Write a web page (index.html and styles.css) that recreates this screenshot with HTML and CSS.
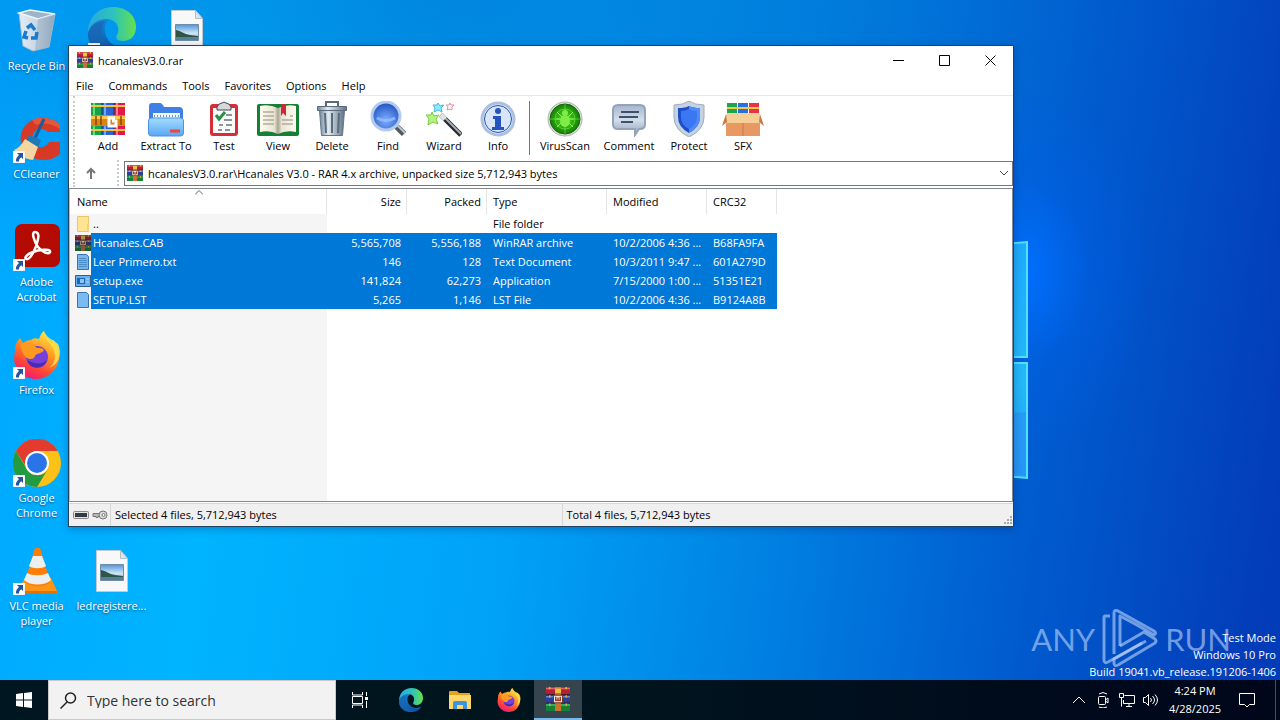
FILE: index.html
```html
<!DOCTYPE html>
<html lang="en">
<head>
<meta charset="utf-8">
<meta name="viewport" content="width=device-width, initial-scale=1">
<title>hcanalesV3.0.rar</title>
<link rel="stylesheet" href="styles.css">
</head>
<body>
<svg class="defs" aria-hidden="true">
  <defs>
    <linearGradient id="gEdgeA" x1="0" y1="0" x2="1" y2="0"><stop offset="0" stop-color="#2aa8e0"/><stop offset=".55" stop-color="#2fc4b8"/><stop offset="1" stop-color="#67e04a"/></linearGradient>
    <linearGradient id="gEdgeB" x1="0" y1="0" x2="0" y2="1"><stop offset="0" stop-color="#1789d8"/><stop offset="1" stop-color="#0c4fa0"/></linearGradient>
    <linearGradient id="gFox" x1=".8" y1="0" x2=".3" y2="1"><stop offset="0" stop-color="#fff04a"/><stop offset=".4" stop-color="#ff9a22"/><stop offset=".75" stop-color="#ff4438"/><stop offset="1" stop-color="#f0187c"/></linearGradient>
    <linearGradient id="gFold" x1="0" y1="0" x2="0" y2="1"><stop offset="0" stop-color="#a5dcff"/><stop offset="1" stop-color="#5aa7f4"/></linearGradient>
    <linearGradient id="gMetal" x1="0" y1="0" x2="1" y2="0"><stop offset="0" stop-color="#73879b"/><stop offset=".35" stop-color="#e3ebf2"/><stop offset="1" stop-color="#5e7287"/></linearGradient>
    <linearGradient id="gSilver" x1="0" y1="0" x2="0" y2="1"><stop offset="0" stop-color="#a5b5cc"/><stop offset=".5" stop-color="#d4deeb"/><stop offset="1" stop-color="#8fa1bb"/></linearGradient>
    <radialGradient id="gBlue" cx=".5" cy=".65" r=".6"><stop offset="0" stop-color="#7eb0ff"/><stop offset="1" stop-color="#2456c4"/></radialGradient>
    <radialGradient id="gGreen"><stop offset="0" stop-color="#55e41c"/><stop offset="1" stop-color="#138007"/></radialGradient>
    <linearGradient id="gSky" x1="0" y1="0" x2="0" y2="1"><stop offset="0" stop-color="#4e95dc"/><stop offset=".55" stop-color="#cfe5f3"/><stop offset="1" stop-color="#8eb2c6"/></linearGradient>
    <linearGradient id="gBin" x1="0" y1="0" x2="1" y2="0"><stop offset="0" stop-color="#e3edf5"/><stop offset=".6" stop-color="#c3d3e1"/><stop offset="1" stop-color="#8fa7bd"/></linearGradient>
    <linearGradient id="gPaneA" x1="0" y1="0" x2="0" y2="1"><stop offset="0" stop-color="#1eaaff"/><stop offset=".6" stop-color="#24b8f8"/><stop offset="1" stop-color="#229cf6"/></linearGradient>
    <linearGradient id="gBook" x1="0" y1="0" x2="1" y2="0"><stop offset="0" stop-color="#fffdf0"/><stop offset=".4" stop-color="#e9e4d2"/><stop offset=".5" stop-color="#a9a593"/><stop offset=".6" stop-color="#e9e4d2"/><stop offset="1" stop-color="#fffdf0"/></linearGradient>
  </defs>
  <symbol id="rar" viewBox="0 0 16 16">
    <path fill="#b3222f" d="M0 0h16v5H0z"/><path fill="#2b3f9e" d="M0 5.500h16v5H0z"/><path fill="#15803c" d="M0 11h16v5H0z"/>
    <path stroke="#e8637a" d="M0 1h16"/><path stroke="#5f8de0" d="M0 6.500h16"/><path stroke="#3cc060" d="M0 12h16"/>
    <path stroke="#3a1230" stroke-width=".7" d="M0 5.200h16M0 10.700h16"/>
    <path stroke="#e6b52c" d="M2.500 0v16M13.500 0v16" stroke-dasharray="1.500 4"/>
    <path fill="#c8742a" d="M6 0h4v16H6z"/><path fill="#f0bd45" d="M6 1h4v3H6z"/>
    <path fill="#f4ede4" stroke="#6b2b1c" stroke-width=".6" d="M5 5.500h6v5H5z"/><path fill="none" stroke="#9b3f2a" d="M6.500 6.500v2.500h3v-2.500M8 7v2"/>
  </symbol>
  <symbol id="edge" viewBox="0 0 48 48">
    <path fill="url(#gEdgeB)" d="M0 27C1 13 12 8 24 11c-7 4-9 10-6 18 4 10 16 14 27 8C39 47 28 50 18 47 7 44 0 36 0 27z"/>
    <path fill="#1a66b4" d="M14 22c-4 12 3 22 14 25-15 4-28-6-28-20 3-9 8-12 17-13-2 3-3 5-3 8z" opacity=".75"/>
    <path fill="url(#gEdgeA)" d="M0 25C0 10 11 0 25 0c14 0 23 9 23 20 0 9-6 14-13 14-6 0-8-3-6-6 3-4 2-16-11-16C10 12 3 17 0 25z"/>
  </symbol>
  <symbol id="fox" viewBox="0 0 48 48">
    <path fill="url(#gFox)" d="M2 19c0-5 2-9 5-12l3 5c3-2 5-3 8-3 2-2 5-2 8-1 1-3 2-6 5-8 1 6 4 8 8 12l1-3c5 6 7 12 6 19-2 12-11 20-23 20C11 48 2 39 1 28z"/>
    <circle cx="24" cy="26" r="11" fill="#7541dc"/><path fill="#4d2bb0" d="M14 29c3 10 17 10 20 0-5 5-13 4-20 0z"/>
    <path fill="#ff9a20" d="M7 13c7-3 13 0 17 4 3 0 6 0 7 2-2 4-8 3-9 6s-4 4-8 2c-4-2-5-8-7-14z"/>
    <path fill="#ffe14a" d="M31 0c0 10 10 12 11 25 0 5-2 9-6 12 11-4 13-16 9-24l-5-4c-5-2-7-5-9-9z" opacity=".85"/>
  </symbol>
  <symbol id="arrow" viewBox="0 0 12 12"><path fill="#fff" stroke="#c8d2dc" stroke-width=".5" d="M0 0h12v12H0z"/><path fill="#27549f" d="M4 2h6v6L8.200 6.200C6 8 6 9 6 10.500H3C2.500 8 4 6 6 4z"/></symbol>
  <symbol id="picture" viewBox="0 0 48 48">
    <path fill="#f8f8f8" stroke="#c2cad0" d="M8.500 3.500h24l7 8v33h-31z"/><path fill="#dce6ee" stroke="#b2bec8" d="M32.500 3.500v8h7z"/>
    <path fill="url(#gSky)" stroke="#6f8ca8" d="M12.500 17.500h23v16h-23z"/><path fill="#2f5644" d="M13 23c5 1 8 4 14 5l8 1v1H13z"/><path fill="#55809a" d="M13 30h22v3H13z"/>
  </symbol>
</svg>

<main class="desktop">
  <svg class="glass" viewBox="0 0 20 240" aria-hidden="true">
    <path fill="url(#gPaneA)" stroke="#4fe2ff" stroke-width="2" d="M-20 5 15 2v115h-35zM-20 123h35v115l-35-3z"/>
    <path fill="#2a8ff5" opacity=".6" d="M0 173l14-1v63L0 233z"/>
  </svg>

  <ul class="icons">
    <li class="icon c1 r1"><svg class="pic" viewBox="0 0 48 48" aria-hidden="true"><path fill="url(#gBin)" stroke="#a9bccb" d="M6 6l36 1-6 33-16 4-10-5z"/><path fill="#9db4c8" stroke="#eff6fa" stroke-width="1.500" d="M6 6l11-3 25 4-17 5z"/><path fill="#91a9bd" opacity=".5" d="M25 12l17-5-6 33-14 3z"/><g fill="none" stroke="#187bd0" stroke-width="3.500"><path d="M14 21l4-3 4 5M24 25l-1 6h-5M15 31l-4-1 2-6"/></g></svg><span>Recycle Bin</span></li>
    <li class="icon c2 r1"><svg class="pic" aria-hidden="true"><use href="#edge"/></svg><svg class="shortcut" aria-hidden="true"><use href="#arrow"/></svg></li>
    <li class="icon c3 r1"><svg class="pic" aria-hidden="true"><use href="#picture"/></svg></li>
    <li class="icon c1 r2"><svg class="pic" viewBox="0 0 48 48" aria-hidden="true"><path fill="#d63a26" d="M47 9C35-1 17 1 10 14c-6 12 0 25 11 29 9 4 19 2 26-4v-12H36c-3 7-14 7-16-1-3-9 7-17 15-9h12z"/><path fill="#f06a45" opacity=".6" d="M47 9C38 2 27 1 19 5l4 5c8-3 17-1 24 4z"/><path stroke="#1a5c9c" stroke-width="3" d="M31 4 22 23"/><path fill="#2078b8" d="M16 20l12 5-3 8-13-5z"/><path fill="#f4d7a0" d="M12 24l13 8-5 13C12 44 5 40 1 35c5-2 8-6 11-11z"/></svg><svg class="shortcut" aria-hidden="true"><use href="#arrow"/></svg><span>CCleaner</span></li>
    <li class="icon c1 r3"><svg class="pic" viewBox="0 0 48 48" aria-hidden="true"><rect x="2" y="1" width="45" height="43" rx="7" fill="#b30b00"/><path fill="none" stroke="#fff" stroke-width="2.500" stroke-linejoin="round" d="M22 9c-4 0-1 9 3 15 4 5 11 8 12 5 1-4-12-2-17 0-6 2-9 6-7 7 4 2 11-12 12-20 1-4 0-7-3-7z"/></svg><svg class="shortcut" aria-hidden="true"><use href="#arrow"/></svg><span>Adobe<br>Acrobat</span></li>
    <li class="icon c1 r4"><svg class="pic" aria-hidden="true"><use href="#fox"/></svg><svg class="shortcut" aria-hidden="true"><use href="#arrow"/></svg><span>Firefox</span></li>
    <li class="icon c1 r5"><svg class="pic" viewBox="0 0 48 48" aria-hidden="true"><circle cx="24" cy="24" r="24" fill="#fbc116"/><path fill="#e33b2e" d="M3 12A24 24 0 0 1 45 12H24a12 12 0 0 0-10 17z"/><path fill="#249a41" d="M3 12a24 24 0 0 0 21 36l11-18a12 12 0 0 1-21 0z"/><circle cx="24" cy="24" r="12" fill="#fff"/><circle cx="24" cy="24" r="10" fill="#2874e8"/></svg><svg class="shortcut" aria-hidden="true"><use href="#arrow"/></svg><span>Google<br>Chrome</span></li>
    <li class="icon c1 r6"><svg class="pic" viewBox="0 0 48 48" aria-hidden="true"><path fill="#ff9514" d="M12 31h26l7 15H3z"/><path fill="#e57200" d="M4 44h40l1 3H3z"/><path fill="#ff7e08" d="M22 1h5l10 33c-2 7-22 7-25 0z"/><path fill="#eceff0" d="M20 9h9l4 10c-4 3-13 3-17 0zM14 26c5 3 15 3 21 0l3 7c-6 6-21 6-27 0z"/></svg><svg class="shortcut" aria-hidden="true"><use href="#arrow"/></svg><span>VLC media<br>player</span></li>
    <li class="icon c2 r6"><svg class="pic" aria-hidden="true"><use href="#picture"/></svg><span>ledregistere...</span></li>
  </ul>

  <div class="brand">
    <span>ANY</span>
    <svg class="play" viewBox="0 0 56 60" aria-hidden="true"><g fill="none" stroke="currentColor" stroke-width="3" stroke-linejoin="round"><path d="M8 7H3q-1 0-1 2v42q0 4 4 2l34-19"/><path d="M12 45V4q0-4 4-2l36 20q3 2 0 4L35 16 18 7v30"/><path d="M18 37l24-14 11 7q2 2 0 4L16 56q-4 2-4-2v-4l32-18"/></g></svg>
    <span>RUN</span>
  </div>
  <p class="build">Test Mode<br>Windows 10 Pro<br>Build 19041.vb_release.191206-1406</p>

  <section class="window" aria-label="hcanalesV3.0.rar">
    <header class="titlebar">
      <svg class="mini" aria-hidden="true"><use href="#rar"/></svg><h1>hcanalesV3.0.rar</h1>
      <button class="caption" aria-label="Minimize"><svg viewBox="0 0 11 11"><path d="M0 5.500h11"/></svg></button>
      <button class="caption" aria-label="Maximize"><svg viewBox="0 0 11 11"><path d="M.5.500h10v10H.500z"/></svg></button>
      <button class="caption" aria-label="Close"><svg viewBox="0 0 11 11"><path d="M.5.500l10 10M10.500.500l-10 10"/></svg></button>
    </header>
    <nav class="menu"><button>File</button><button>Commands</button><button>Tools</button><button>Favorites</button><button>Options</button><button>Help</button></nav>
    <div class="toolbar">
      <button class="tool"><svg viewBox="0 0 36 36" aria-hidden="true"><path fill="#15a34a" d="M1 2h11v32H1z"/><path fill="#2863d8" d="M12 2h12v32H12z"/><path fill="#e21b46" d="M24 2h11v32H24z"/><path stroke="#65db83" stroke-width="2" d="M4 2v32"/><path stroke="#72a7ff" stroke-width="2" d="M15 2v32"/><path stroke="#ff7790" stroke-width="2" d="M27 2v32"/><path stroke="#0c3c50" stroke-width="1" d="M12 2v32M24 2v32"/><path stroke="#f5c342" stroke-width="2" d="M1 5h34M1 29h34"/><path fill="#d98512" d="M1 14h34v11H1z"/><path fill="#ffc949" d="M1 15h34v3H1z"/><path stroke="#8c4708" stroke-width="1.500" d="M6 15v9M11 15v9M31 15v9"/><path fill="none" stroke="#fff" stroke-width="3" d="M25 17h-6v8h7v-5h-4"/></svg><span>Add</span></button>
      <button class="tool wide"><svg viewBox="0 0 36 36" aria-hidden="true"><path fill="#3e7fe8" d="M1 5q0-3 3-3h8q2 0 4 4h15q4 0 4 4v18H1z"/><path fill="#edf7ff" d="M5 12h27v12H5z"/><path stroke="#7895b2" stroke-width="2" stroke-dasharray="1 2" d="M6 15h25"/><path fill="url(#gFold)" stroke="#4b91e5" d="M.5 20q0-3 3-3h29q3 0 3 3v12q0 3-3 3h-29q-3 0-3-3z"/><path stroke="#ee4638" stroke-width="3" d="M22 30h10"/></svg><span>Extract To</span></button>
      <button class="tool"><svg viewBox="0 0 36 36" aria-hidden="true"><rect x="4" y="3" width="28" height="32" rx="3" fill="#d62d37"/><path fill="#fafafa" d="M7 7h22v25H7z"/><path fill="#d5d8dc" stroke="#42464d" d="M11 6q2-4 5-4 2-2 4 0 3 0 5 4v3H11z"/><path fill="none" stroke="#26934b" stroke-width="3" d="M10 14l3 4 6-7"/><path stroke="#6a737e" stroke-width="1.500" d="M20 14h6M18 19h8M13 24h4M20 24h6M12 29h4M19 29h5"/></svg><span>Test</span></button>
      <button class="tool"><svg class="broad" viewBox="0 0 44 36" aria-hidden="true"><rect x="1" y="3" width="42" height="32" rx="2" fill="#157f35"/><path fill="url(#gBook)" d="M4 5q9-2 18 2 9-4 18-2v26q-10-2-18 2-8-4-18-2z"/><path stroke="#8d8b83" stroke-width="1" d="M7 11h11M7 15h11M7 19h11M7 23h11M26 19h11M26 23h11M34 15h3"/><path fill="#cf2835" d="M25 3h5v12l-3-3-2 3z"/></svg><span>View</span></button>
      <button class="tool"><svg viewBox="0 0 36 36" aria-hidden="true"><path fill="url(#gMetal)" stroke="#63768a" d="M5.500 9.500h25l-2 25h-21z"/><path fill="url(#gMetal)" stroke="#5b6b7c" d="M3.500 5.500h29v4h-29z"/><path fill="none" stroke="#596b7d" stroke-width="2" d="M12 5V1h12v4M11 12l1 20M18 12v20M25 12l-1 20"/></svg><span>Delete</span></button>
      <button class="tool mid"><svg viewBox="0 0 36 36" aria-hidden="true"><path stroke="#535960" stroke-width="6" d="M25 24l9 9"/><path stroke="#bdc6cf" stroke-width="2" d="M26 23l9 9"/><circle cx="16" cy="15" r="14" fill="url(#gBlue)" stroke="#b5cbed" stroke-width="3"/><path fill="none" stroke="#98bfff" stroke-width="3" opacity=".8" d="M7 17q9 5 18 0"/></svg><span>Find</span></button>
      <button class="tool"><svg viewBox="0 0 36 36" aria-hidden="true"><path stroke="#24272b" stroke-width="5" d="M15 14l20 20"/><path stroke="#a7adb3" stroke-width="2" d="M15 13l20 20"/><path stroke="#e3e5e7" stroke-width="5" d="M15 14l4 4"/><path fill="#b8f184" stroke="#70cf44" d="M6 11l2 4 5-1-3 4 2 5-5-2-5 3 1-6-3-4 5 0z"/><path fill="#8ee9ff" stroke="#41bde2" d="M12 2l2 3 4-1-3 3 1 4-4-2-4 2 1-4-2-3h4z"/><path fill="none" stroke="#ee8d96" d="M24 2l1 2h3l-2 2v3l-2-1-3 1 1-3-2-2h3z"/></svg><span>Wizard</span></button>
      <button class="tool"><svg viewBox="0 0 36 36" aria-hidden="true"><circle cx="18" cy="18" r="16" fill="#e9eff8" stroke="#abc0e1" stroke-width="3"/><circle cx="18" cy="18" r="13.500" fill="#d8e5fa" stroke="#2856a8"/><circle cx="18" cy="10" r="3" fill="#2454bd"/><path fill="#2454bd" d="M13 15h8v11h3v3H12v-3h3v-8h-2z"/></svg><span>Info</span></button>
      <i class="divider"></i>
      <button class="tool wide"><svg viewBox="0 0 36 36" aria-hidden="true"><circle cx="18" cy="18" r="17" fill="#d8ddd8" stroke="#aeb7af"/><circle cx="18" cy="18" r="15" fill="url(#gGreen)" stroke="#17620f"/><g fill="none" stroke="#8df65a"><circle cx="18" cy="18" r="10" opacity=".5"/><path d="M3 18h30M18 3v30" opacity=".5"/><path d="M10 11l5 5M26 11l-5 5M10 26l5-5M26 26l-5-5M9 18h5M22 18h5"/></g><ellipse cx="18" cy="20" rx="5" ry="6" fill="#7deb48"/><circle cx="18" cy="12" r="3" fill="#7deb48"/></svg><span>VirusScan</span></button>
      <button class="tool wider"><svg viewBox="0 0 36 36" aria-hidden="true"><path fill="url(#gSilver)" stroke="#93a3ba" stroke-width="2" d="M7 4h22q5 0 5 5v14q0 5-5 5h-1l-4 6v-6H7q-5 0-5-5V9q0-5 5-5z"/><path stroke="#40506a" stroke-width="2" d="M10 11h18M8 16h19M10 21h12"/></svg><span>Comment</span></button>
      <button class="tool"><svg viewBox="0 0 36 36" aria-hidden="true"><path fill="#c6d2e0" stroke="#9dacbf" d="M18 0q6 4 15 4v12q0 13-15 20Q3 29 3 16V4q9 0 15-4z"/><path fill="#1d50c8" d="M18 5q4 2 11 2v9q0 10-11 16Q7 26 7 16V7q7 0 11-2z"/><path fill="#4f8bfa" d="M18 5q4 2 11 2v9q0 10-11 16z"/><path fill="#3b77f3" d="M18 8q4 2 8 2v6q0 8-8 12-8-4-8-12v-6q4 0 8-2z"/></svg><span>Protect</span></button>
      <button class="tool"><svg class="broad" viewBox="0 0 44 36" aria-hidden="true"><path fill="#18a84b" d="M6 2h10v14H6z"/><path fill="#2b6edc" d="M17 2h10v14H17z"/><path fill="#e6353e" d="M28 2h10v14H28z"/><path stroke="#f5c64d" stroke-width="2" d="M6 7h32"/><path fill="#e89862" d="M5 16h34v19H5z"/><path fill="#f5cf96" d="M6 12h32l4 10H2z"/><path fill="#cc7949" d="M5 13L1 25l5-4zM39 13l4 12-5-4z"/><path stroke="#c6784d" d="M22 22v13"/></svg><span>SFX</span></button>
    </div>
    <div class="pathbar">
      <button class="up" aria-label="Up one level"><svg viewBox="0 0 12 12"><path d="M6 12V2M2 6l4-4 4 4"/></svg></button>
      <div class="combo"><svg class="mini" aria-hidden="true"><use href="#rar"/></svg><input type="text" aria-label="Path" value="hcanalesV3.0.rar\Hcanales V3.0 - RAR 4.x archive, unpacked size 5,712,943 bytes"><button aria-label="Path history"><svg viewBox="0 0 10 6"><path d="M1 1l4 4 4-4"/></svg></button></div>
    </div>
    <div class="list">
      <table>
        <colgroup><col class="name"><col class="num"><col class="num"><col class="type"><col class="date"><col class="crc"></colgroup>
        <thead><tr><th>Name<svg class="sort" viewBox="0 0 8 5" aria-hidden="true"><path d="M0 4.500l4-4 4 4"/></svg></th><th class="right">Size</th><th class="right">Packed</th><th>Type</th><th>Modified</th><th>CRC32</th></tr></thead>
        <tbody>
          <tr><td><div class="file"><svg viewBox="0 0 16 18" aria-hidden="true"><path fill="#ffe393" stroke="#e8c768" d="M2.500 1.500h11v15h-11z"/><path fill="#f7d16c" d="M12 9h2v7h-2z"/></svg><span>..</span></div></td><td></td><td></td><td>File folder</td><td></td><td></td></tr>
          <tr class="on"><td><div class="file"><svg class="dim" aria-hidden="true"><use href="#rar"/></svg><span>Hcanales.CAB</span></div></td><td class="right">5,565,708</td><td class="right">5,556,188</td><td>WinRAR archive</td><td>10/2/2006 4:36 ...</td><td>B68FA9FA</td></tr>
          <tr class="on"><td><div class="file"><svg viewBox="0 0 16 18" aria-hidden="true"><path fill="#78b5ec" stroke="#3574ad" d="M2.500 1.500h9l2 2v13h-11z"/><path stroke="#4a8cc4" d="M4 5.500h7M4 7.500h8M4 9.500h8M4 11.500h8M4 13.500h8"/></svg><span>Leer Primero.txt</span></div></td><td class="right">146</td><td class="right">128</td><td>Text Document</td><td>10/3/2011 9:47 ...</td><td>601A279D</td></tr>
          <tr class="on"><td><div class="file"><svg viewBox="0 0 16 18" aria-hidden="true"><path fill="#6aaef0" stroke="#2c6196" d="M.5 3.500h15v11H.500z"/><path fill="#1768b4" d="M2 6h8v6H2z"/><path fill="#8cc4f5" d="M5 7h4v4H5zM11 6h3v2h-3zM11 9h3v2h-3z"/></svg><span>setup.exe</span></div></td><td class="right">141,824</td><td class="right">62,273</td><td>Application</td><td>7/15/2000 1:00 ...</td><td>51351E21</td></tr>
          <tr class="on"><td><div class="file"><svg viewBox="0 0 16 18" aria-hidden="true"><path fill="#7cbaf0" stroke="#3574ad" d="M2.500 1.500h9l2 2v13h-11z"/></svg><span>SETUP.LST</span></div></td><td class="right">5,265</td><td class="right">1,146</td><td>LST File</td><td>10/2/2006 4:36 ...</td><td>B9124A8B</td></tr>
        </tbody>
      </table>
    </div>
    <footer class="status">
      <div class="lights"><svg viewBox="0 0 16 10" aria-hidden="true"><rect x=".5" y="1.500" width="15" height="7" rx="1" fill="#e2e2e2" stroke="#888"/><path fill="#333b42" d="M2 3h12v4H2z"/></svg><svg viewBox="0 0 16 10" aria-hidden="true"><path fill="#b8b8b8" stroke="#777" d="M1 3.500h8v3H6v1H4v-1H1z"/><circle cx="11" cy="5" r="4" fill="#ddd" stroke="#777"/><circle cx="11.500" cy="5" r="1.500" fill="#fff" stroke="#777"/></svg></div>
      <p>Selected 4 files, 5,712,943 bytes</p><p>Total 4 files, 5,712,943 bytes</p>
      <svg class="grip" viewBox="0 0 10 10" aria-hidden="true"><path fill="#a9a9a9" d="M7 0h2v2H7zM4 3h2v2H4zM7 3h2v2H7zM1 6h2v2H1zM4 6h2v2H4zM7 6h2v2H7z"/></svg>
    </footer>
  </section>
</main>

<footer class="taskbar">
  <button class="start" aria-label="Start"><svg viewBox="0 0 16 16"><path fill="#fff" d="M0 2l7-1v6.500H0zM8 1l8-1v7.500H8zM0 8.500h7V15l-7-1zM8 8.500h8V16l-8-1z"/></svg></button>
  <label class="search"><svg viewBox="0 0 17 17" aria-hidden="true"><circle cx="10.500" cy="6" r="5"/><path d="M7 10L.5 16.500"/></svg><input type="text" placeholder="Type here to search" aria-label="Type here to search"></label>
  <button class="taskview" aria-label="Task View"><svg viewBox="0 0 24 24"><path d="M4.500 4v3h10V4M4.500 20v-3h10v3M4.500 8.500v7h10v-7zM18.500 4v4M18.500 13v7"/><path fill="#fff" stroke="none" d="M17 9h3v3h-3z"/></svg></button>
  <div class="apps">
    <button aria-label="Microsoft Edge"><svg><use href="#edge"/></svg></button>
    <button aria-label="File Explorer"><svg viewBox="0 0 24 24"><path fill="#e8a11f" d="M1 4q0-1 1-1h7l2 2h11v5H1z"/><path fill="#ffd869" d="M1 7h22v14H1z"/><path fill="#3a95dc" d="M5 21v-6q0-2 2-2h10q2 0 2 2v6h-4v-4H9v4z"/></svg></button>
    <button aria-label="Firefox"><svg><use href="#fox"/></svg></button>
    <button class="active" aria-label="WinRAR"><svg><use href="#rar"/></svg></button>
  </div>
  <div class="tray">
    <button aria-label="Show hidden icons"><svg viewBox="0 0 16 16"><path d="M2 11l6-6 6 6"/></svg></button>
    <button aria-label="Meet Now"><svg viewBox="0 0 16 16"><rect x="3.500" y="4.500" width="7" height="8" rx="1"/><path d="M10.500 8l2.500-2v5l-2.500-2M4 2q4-3 8 0M4 15q4 2 8 0"/></svg></button>
    <button aria-label="Network"><svg viewBox="0 0 16 16"><path d="M5.500 3.500h10v8h-11V8M10 12v3M7 14.500h6M.5 1.500h4v4h-4zM2.500 5.500v9"/></svg></button>
    <button aria-label="Volume"><svg viewBox="0 0 16 16"><path d="M.5 5.500h2l3-3v11l-3-3h-2zM7.500 6q2 2 0 4M9.500 4q4 4 0 8M12 2.500q5 5.500 0 11"/></svg></button>
    <time datetime="2025-04-28T16:24">4:24 PM<br>4/28/2025</time>
    <button class="notes" aria-label="Notifications"><svg viewBox="0 0 16 16"><path d="M.5 1.500h15v11h-5L8 15l-2.500-2.500h-5z"/></svg></button>
    <i class="peek"></i>
  </div>
</footer>
</body>
</html>
```
FILE: styles.css
```css
* { box-sizing: border-box; }
html, body { height: 100%; margin: 0; }
body { display: flex; flex-direction: column; overflow: hidden; font: 11px/15px "Open Sans", "Noto Sans", sans-serif; color: #000; }
button, input { margin: 0; padding: 0; border: 0; background: none; font: inherit; color: inherit; }
h1, p, ul { margin: 0; padding: 0; font: inherit; list-style: none; }
svg { display: block; flex: none; }
.defs { position: absolute; width: 0; height: 0; }

.desktop {
  position: relative; flex: 1; min-height: 0; overflow: hidden;
  background:
    radial-gradient(ellipse 130px 180px at 80% 40%, rgba(0, 112, 255, .95), rgba(0, 96, 240, .35) 50%, rgba(0, 80, 220, 0)),
    radial-gradient(ellipse 760px 320px at 35% 0%, rgba(0, 105, 200, .55), rgba(0, 105, 200, 0)),
    linear-gradient(98deg, #00a8ff 0%, #00b4ff 20%, #00a2f8 42%, #0084e4 60%, #005ccf 80%, #033cb8 98%);
}
.glass { position: absolute; left: 79%; top: 35%; margin: 2px 0 0 1px; width: 20px; height: 240px; }

.icons { display: grid; grid-template-columns: repeat(3, 75px); grid-auto-rows: 108px; }
.icon { position: relative; display: flex; flex-direction: column; align-items: center; gap: 3px; padding: 7px 2px 0 0; color: #fff; text-align: center; text-shadow: 0 1px 2px rgba(0, 40, 90, .7); white-space: nowrap; }
.pic { width: 48px; height: 48px; }
.shortcut { position: absolute; left: 13px; top: 43px; width: 12px; height: 12px; }
.c1 { grid-column: 1; } .c2 { grid-column: 2; } .c3 { grid-column: 3; }
.r1 { grid-row: 1; } .r2 { grid-row: 2; } .r3 { grid-row: 3; } .r4 { grid-row: 4; } .r5 { grid-row: 5; } .r6 { grid-row: 6; }

.brand { position: absolute; right: 49px; bottom: 11px; display: flex; align-items: center; gap: 7px; color: rgba(190, 215, 250, .6); font: 31px/60px "Lato", sans-serif; }
.play { width: 56px; height: 60px; }
.build { position: absolute; right: 4px; bottom: 0; color: #fff; line-height: 17px; text-align: right; }

.window { position: absolute; left: 68px; top: 45px; right: 266px; bottom: 153px; display: flex; flex-direction: column; background: #fff; border: 1px solid #23425f; box-shadow: 0 2px 8px rgba(0, 30, 90, .3); }
.mini { width: 16px; height: 16px; }
.titlebar { display: flex; align-items: center; height: 28px; padding-left: 8px; }
.titlebar h1 { flex: 1; padding-left: 5px; }
.caption { display: grid; place-items: center; width: 46px; height: 28px; }
.caption svg { width: 11px; height: 11px; fill: none; stroke: #000; }
.menu { display: flex; gap: 15px; height: 22px; padding: 2px 0 0 7px; border-bottom: 1px solid #e9e9e9; }
.toolbar { display: flex; height: 63px; margin-left: 4px; padding: 5px 0 0 6px; border-left: 2px dotted #c4d0c4; }
.tool { display: flex; flex-direction: column; align-items: center; gap: 1px; width: 54px; height: 54px; white-space: nowrap; }
.tool.mid { width: 58px; }
.tool.wide { width: 62px; }
.tool.wider { width: 66px; }
.tool svg { width: 36px; height: 36px; }
.tool svg.broad { width: 44px; }
.divider { width: 1px; height: 54px; margin: 0 4px; background: #777; }
.pathbar { display: flex; align-items: center; height: 28px; margin-left: 4px; border-left: 2px dotted #c4d0c4; }
.up { display: grid; place-items: center; width: 44px; height: 26px; padding-right: 10px; border-right: 2px dotted #c4d0c4; }
.up svg { width: 12px; height: 12px; fill: none; stroke: #777; stroke-width: 2; }
.combo { flex: 1; display: flex; align-items: center; height: 25px; margin-left: 5px; padding-left: 2px; border: 1px solid #777; }
.combo input { flex: 1; min-width: 0; padding-left: 5px; outline: 0; }
.combo button { display: grid; place-items: center; width: 16px; height: 100%; }
.combo button svg { width: 10px; height: 6px; fill: none; stroke: #444; }

.list { flex: 1; min-height: 0; margin-top: 1px; overflow: hidden; border: 1px solid #828790; border-left-color: #bbb; background: linear-gradient(#f5f5f5, #f5f5f5) left / 257px 100% no-repeat #fff; }
table { table-layout: fixed; width: 707px; border-collapse: separate; border-spacing: 0; }
.name { width: 257px; } .num { width: 80px; } .type { width: 120px; } .date { width: 100px; } .crc { width: 70px; }
th { position: relative; height: 25px; padding: 0 5px 0 6px; background: #fff; border-right: 1px solid #e5e5e5; font-weight: 400; text-align: left; }
th:first-child { padding-left: 7px; }
td { height: 19px; padding: 0 6px; white-space: nowrap; }
td:first-child { padding: 0; }
.right { text-align: right; }
.sort { position: absolute; left: 49%; top: 1px; width: 8px; height: 5px; fill: none; stroke: #666; }
.file { display: flex; align-items: center; padding-left: 5px; }
.file svg { width: 16px; height: 18px; }
.file span { flex: 1; padding-left: 2px; line-height: 19px; }
.on td { background: #0078d7; color: #fff; }
.on td:first-child { background: none; }
.on .file span { background: #0078d7; }
.dim { filter: brightness(.75) saturate(.8); }

.status { position: relative; display: flex; align-items: center; height: 23px; margin-top: 1px; border-top: 1px solid #d7d7d7; background: #f0f0f0; }
.lights { display: flex; gap: 3px; width: 41px; padding-left: 4px; }
.lights svg { width: 16px; height: 10px; }
.status p { flex: 1; padding-left: 4px; border-left: 1px solid #d7d7d7; line-height: 22px; }
.grip { position: absolute; right: 0; bottom: 0; width: 10px; height: 10px; }

.taskbar { display: flex; height: 40px; background: linear-gradient(90deg, #001620, #00141e 50%, #000a1c 85%, #00071a); color: #fff; }
.start, .taskview { display: grid; place-items: center; width: 48px; }
.start svg { width: 16px; height: 16px; }
.search { display: flex; align-items: center; gap: 10px; width: 288px; padding-left: 11px; background: #f2f2f2; border: 1px solid #c9c9c9; color: #222; font-size: 14px; }
.search svg { width: 17px; height: 17px; fill: none; stroke: #222; stroke-width: 1.500; }
.search input { flex: 1; min-width: 0; outline: 0; }
.search input::placeholder { color: #333; opacity: 1; }
.taskview svg { width: 24px; height: 24px; fill: none; stroke: #fff; }
.apps { display: flex; gap: 1px; margin-left: 3px; }
.apps button { display: grid; place-items: center; width: 48px; }
.apps svg { width: 24px; height: 24px; }
.apps .active { background: #35444d; border-bottom: 2px solid #76b9ed; }
.tray { display: flex; align-items: center; margin-left: auto; }
.tray button { display: grid; place-items: center; width: 24px; height: 40px; }
.tray svg { width: 16px; height: 16px; fill: none; stroke: #fff; }
.tray time { width: 64px; text-align: center; line-height: 18px; }
.tray .notes { width: 40px; }
.peek { width: 5px; height: 40px; margin-left: 8px; border-left: 1px solid #47505f; }
```
